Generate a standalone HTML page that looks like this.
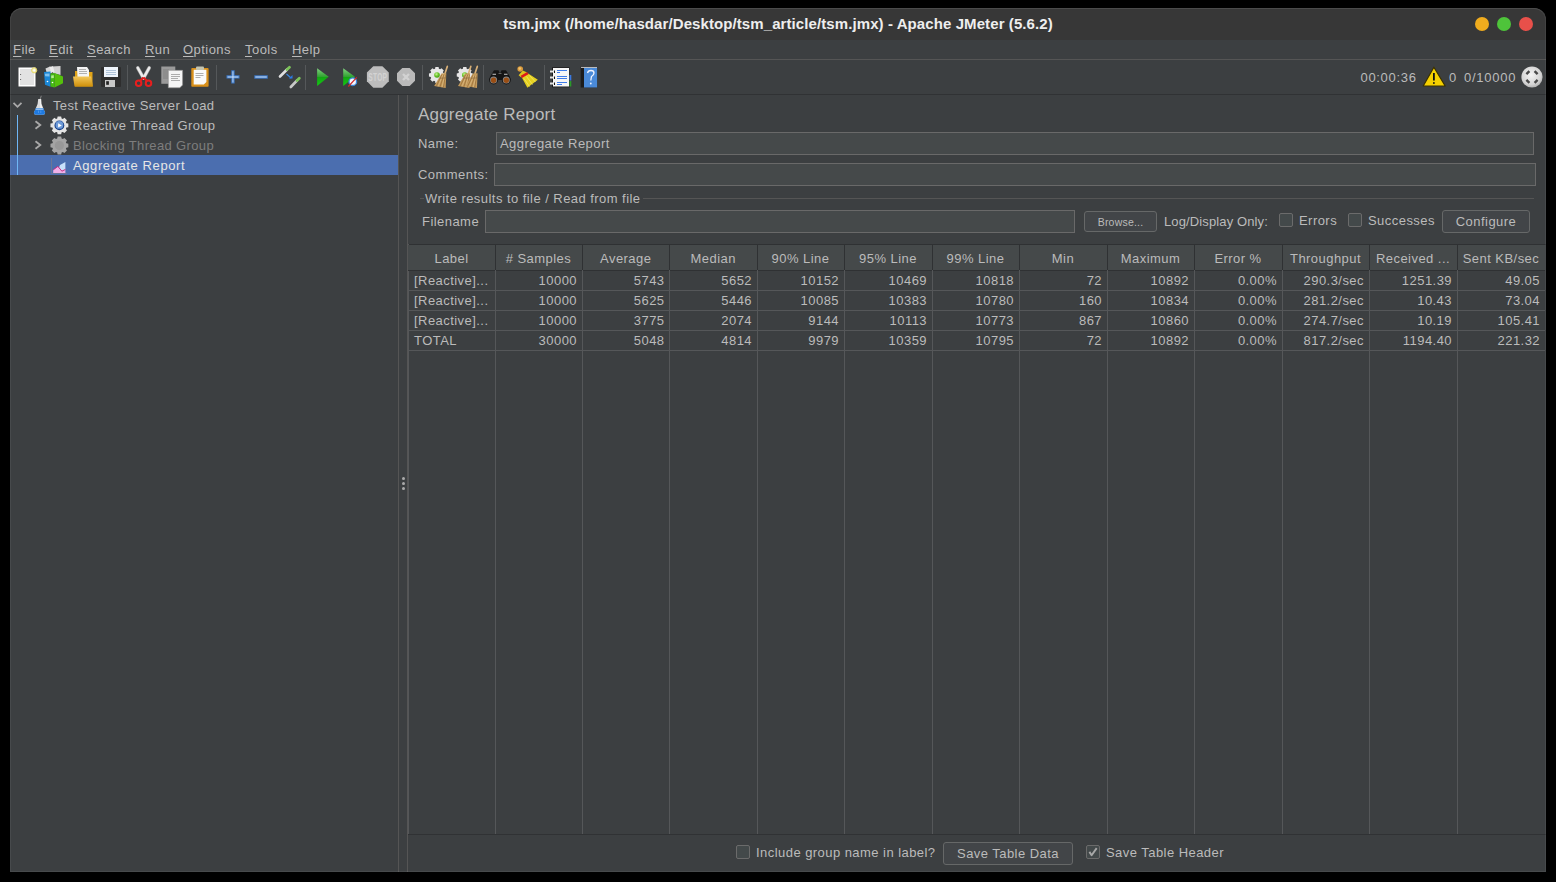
<!DOCTYPE html>
<html><head><meta charset="utf-8">
<style>
*{margin:0;padding:0;box-sizing:border-box}
html,body{width:1556px;height:882px;background:#000;overflow:hidden}
body{font-family:"Liberation Sans",sans-serif;font-size:13px;letter-spacing:0.45px;color:#bbbbbb;position:relative}
.a{position:absolute;white-space:nowrap;line-height:15px}
#win{position:absolute;left:10px;top:8px;width:1536px;height:864px;background:#3c3f41;border-radius:12px 12px 0 0;overflow:hidden}
#winb{position:absolute;left:10px;top:8px;width:1536px;height:864px;border-radius:12px 12px 0 0;border:1px solid rgba(255,255,255,0.06);border-top-color:rgba(255,255,255,0.1)}
#title{position:absolute;left:10px;top:8px;width:1536px;height:32px;background:#373737;border-radius:12px 12px 0 0}
#titletext{position:absolute;left:10px;width:1536px;top:16px;text-align:center;color:#eeeeee;font-weight:bold;font-size:15px;letter-spacing:0.09px;line-height:16px}
.dot{position:absolute;top:17px;width:14px;height:14px;border-radius:50%}
.menu{top:42px}
.menu u{text-decoration:underline;text-underline-offset:1.5px}
.hsep{position:absolute;height:1px}
.vsep{position:absolute;width:1px}
.tree{top:98px;letter-spacing:0.36px}
.th{position:absolute;top:245px;height:25px;background:#45494a;text-align:center;line-height:27px;white-space:nowrap}
.thsep{position:absolute;top:245px;height:25px;width:1px;background:#2f3133}
.td{position:absolute;height:20px;line-height:21px;text-align:right;padding-right:5px;white-space:nowrap}
.td.l{text-align:left;padding-left:6px;padding-right:0}
.vl{position:absolute;top:270px;height:564px;width:1px;background:#555759}
.hl{position:absolute;left:408px;width:1137px;height:1px;background:#555759}
.field{position:absolute;background:#45494a;border:1px solid #696969}
.btn{position:absolute;border:1px solid #666868;border-radius:3px;background:#424548;text-align:center}
.cb{position:absolute;width:14px;height:14px;border:1px solid #6b6b6b;border-radius:2px;background:#43494a}
</style></head><body>
<div id="win"></div>
<div id="title"></div>
<div id="titletext">tsm.jmx (/home/hasdar/Desktop/tsm_article/tsm.jmx) - Apache JMeter (5.6.2)</div>
<div class="dot" style="left:1475px;background:#f0ac1e"></div>
<div class="dot" style="left:1497px;background:#4ec43a"></div>
<div class="dot" style="left:1519px;background:#e8504a"></div>

<span class="a menu" style="left:13px"><u>F</u>ile</span>
<span class="a menu" style="left:49px"><u>E</u>dit</span>
<span class="a menu" style="left:87px"><u>S</u>earch</span>
<span class="a menu" style="left:145px"><u>R</u>un</span>
<span class="a menu" style="left:183px"><u>O</u>ptions</span>
<span class="a menu" style="left:245px"><u>T</u>ools</span>
<span class="a menu" style="left:292px"><u>H</u>elp</span>
<div class="hsep" style="left:10px;top:59px;width:1536px;background:#555555"></div>
<div class="hsep" style="left:10px;top:94px;width:1536px;background:#303234"></div>


<div class="a" style="left:1360.5px;top:70px;letter-spacing:0.68px">00:00:36</div>
<div class="a" style="left:1449px;top:70px">0</div>
<div class="a" style="left:1464px;top:70px;letter-spacing:0.75px">0/10000</div>

<!-- tree -->
<div style="position:absolute;left:10px;top:155px;width:388px;height:20px;background:#4b6eaf"></div>
<div style="position:absolute;left:17px;top:115px;width:1px;height:60px;background:#6fb6f5"></div>
<div class="a tree" style="left:53px;top:98px">Test Reactive Server Load</div>
<div class="a tree" style="left:73px;top:118px">Reactive Thread Group</div>
<div class="a tree" style="left:73px;top:138px;color:#7d7d7d">Blocking Thread Group</div>
<div class="a tree" style="left:73px;top:158px;color:#e6e6e6;letter-spacing:0.6px">Aggregate Report</div>

<div class="vsep" style="left:398px;top:95px;height:777px;background:#555555"></div>
<div class="vsep" style="left:407px;top:95px;height:777px;background:#555555"></div>
<div style="position:absolute;left:401.5px;top:477px;width:3px;height:3px;border-radius:50%;background:#aaa"></div>
<div style="position:absolute;left:401.5px;top:482px;width:3px;height:3px;border-radius:50%;background:#aaa"></div>
<div style="position:absolute;left:401.5px;top:487px;width:3px;height:3px;border-radius:50%;background:#aaa"></div>

<!-- form -->
<div class="a" style="left:418px;top:105px;font-size:17px;letter-spacing:0.2px;line-height:20px">Aggregate Report</div>
<div class="a" style="left:418px;top:136px">Name:</div>
<div class="field" style="left:496px;top:132px;width:1038px;height:23px"></div>
<div class="a" style="left:500px;top:136px">Aggregate Report</div>
<div class="a" style="left:418px;top:167px">Comments:</div>
<div class="field" style="left:494px;top:163px;width:1042px;height:23px"></div>
<div class="hsep" style="left:420px;top:198px;width:4px;background:#555"></div>
<div class="a" style="left:425px;top:191px">Write results to file / Read from file</div>
<div class="hsep" style="left:643px;top:198px;width:891px;background:#555"></div>
<div class="a" style="left:422px;top:214px">Filename</div>
<div class="field" style="left:485px;top:210px;width:590px;height:23px"></div>
<div class="btn" style="left:1084px;top:211px;width:73px;height:21px;font-size:10.5px;letter-spacing:0.2px;line-height:20px">Browse...</div>
<div class="a" style="left:1164px;top:214px;letter-spacing:0.12px">Log/Display Only:</div>
<div class="cb" style="left:1279px;top:213px"></div>
<div class="a" style="left:1299px;top:213px">Errors</div>
<div class="cb" style="left:1348px;top:213px"></div>
<div class="a" style="left:1368px;top:213px">Successes</div>
<div class="btn" style="left:1442px;top:210px;width:88px;height:23px;line-height:21px">Configure</div>

<!-- table -->
<div style="position:absolute;left:408px;top:244px;width:1138px;height:1px;background:#2f3133"></div>
<div style="position:absolute;left:408px;top:244px;width:1px;height:591px;background:#555759"></div>
<div style="position:absolute;left:408px;top:270px;width:1137px;height:1px;background:#2f3133"></div>
<div class="th" style="left:408px;width:87px">Label</div>
<div class="th" style="left:495px;width:87px"># Samples</div>
<div class="th" style="left:582px;width:87.5px">Average</div>
<div class="th" style="left:669.5px;width:87.5px">Median</div>
<div class="th" style="left:757px;width:87px">90% Line</div>
<div class="th" style="left:844px;width:88px">95% Line</div>
<div class="th" style="left:932px;width:87px">99% Line</div>
<div class="th" style="left:1019px;width:88px">Min</div>
<div class="th" style="left:1107px;width:87px">Maximum</div>
<div class="th" style="left:1194px;width:88px">Error %</div>
<div class="th" style="left:1282px;width:87px">Throughput</div>
<div class="th" style="left:1369px;width:88px">Received ...</div>
<div class="th" style="left:1457px;width:88px">Sent KB/sec</div>
<div class="thsep" style="left:495px"></div>
<div class="thsep" style="left:582px"></div>
<div class="thsep" style="left:669px"></div>
<div class="thsep" style="left:757px"></div>
<div class="thsep" style="left:844px"></div>
<div class="thsep" style="left:932px"></div>
<div class="thsep" style="left:1019px"></div>
<div class="thsep" style="left:1107px"></div>
<div class="thsep" style="left:1194px"></div>
<div class="thsep" style="left:1282px"></div>
<div class="thsep" style="left:1369px"></div>
<div class="thsep" style="left:1457px"></div>
<div class="vl" style="left:495px"></div>
<div class="vl" style="left:582px"></div>
<div class="vl" style="left:669px"></div>
<div class="vl" style="left:757px"></div>
<div class="vl" style="left:844px"></div>
<div class="vl" style="left:932px"></div>
<div class="vl" style="left:1019px"></div>
<div class="vl" style="left:1107px"></div>
<div class="vl" style="left:1194px"></div>
<div class="vl" style="left:1282px"></div>
<div class="vl" style="left:1369px"></div>
<div class="vl" style="left:1457px"></div>
<div class="hl" style="top:290px"></div>
<div class="hl" style="top:310px"></div>
<div class="hl" style="top:330px"></div>
<div class="hl" style="top:350px"></div>
<div class="td l" style="left:408px;width:87px;top:270px">[Reactive]...</div>
<div class="td" style="left:495px;width:87px;top:270px">10000</div>
<div class="td" style="left:582px;width:87.5px;top:270px">5743</div>
<div class="td" style="left:669.5px;width:87.5px;top:270px">5652</div>
<div class="td" style="left:757px;width:87px;top:270px">10152</div>
<div class="td" style="left:844px;width:88px;top:270px">10469</div>
<div class="td" style="left:932px;width:87px;top:270px">10818</div>
<div class="td" style="left:1019px;width:88px;top:270px">72</div>
<div class="td" style="left:1107px;width:87px;top:270px">10892</div>
<div class="td" style="left:1194px;width:88px;top:270px">0.00%</div>
<div class="td" style="left:1282px;width:87px;top:270px">290.3/sec</div>
<div class="td" style="left:1369px;width:88px;top:270px">1251.39</div>
<div class="td" style="left:1457px;width:88px;top:270px">49.05</div>
<div class="td l" style="left:408px;width:87px;top:290px">[Reactive]...</div>
<div class="td" style="left:495px;width:87px;top:290px">10000</div>
<div class="td" style="left:582px;width:87.5px;top:290px">5625</div>
<div class="td" style="left:669.5px;width:87.5px;top:290px">5446</div>
<div class="td" style="left:757px;width:87px;top:290px">10085</div>
<div class="td" style="left:844px;width:88px;top:290px">10383</div>
<div class="td" style="left:932px;width:87px;top:290px">10780</div>
<div class="td" style="left:1019px;width:88px;top:290px">160</div>
<div class="td" style="left:1107px;width:87px;top:290px">10834</div>
<div class="td" style="left:1194px;width:88px;top:290px">0.00%</div>
<div class="td" style="left:1282px;width:87px;top:290px">281.2/sec</div>
<div class="td" style="left:1369px;width:88px;top:290px">10.43</div>
<div class="td" style="left:1457px;width:88px;top:290px">73.04</div>
<div class="td l" style="left:408px;width:87px;top:310px">[Reactive]...</div>
<div class="td" style="left:495px;width:87px;top:310px">10000</div>
<div class="td" style="left:582px;width:87.5px;top:310px">3775</div>
<div class="td" style="left:669.5px;width:87.5px;top:310px">2074</div>
<div class="td" style="left:757px;width:87px;top:310px">9144</div>
<div class="td" style="left:844px;width:88px;top:310px">10113</div>
<div class="td" style="left:932px;width:87px;top:310px">10773</div>
<div class="td" style="left:1019px;width:88px;top:310px">867</div>
<div class="td" style="left:1107px;width:87px;top:310px">10860</div>
<div class="td" style="left:1194px;width:88px;top:310px">0.00%</div>
<div class="td" style="left:1282px;width:87px;top:310px">274.7/sec</div>
<div class="td" style="left:1369px;width:88px;top:310px">10.19</div>
<div class="td" style="left:1457px;width:88px;top:310px">105.41</div>
<div class="td l" style="left:408px;width:87px;top:330px">TOTAL</div>
<div class="td" style="left:495px;width:87px;top:330px">30000</div>
<div class="td" style="left:582px;width:87.5px;top:330px">5048</div>
<div class="td" style="left:669.5px;width:87.5px;top:330px">4814</div>
<div class="td" style="left:757px;width:87px;top:330px">9979</div>
<div class="td" style="left:844px;width:88px;top:330px">10359</div>
<div class="td" style="left:932px;width:87px;top:330px">10795</div>
<div class="td" style="left:1019px;width:88px;top:330px">72</div>
<div class="td" style="left:1107px;width:87px;top:330px">10892</div>
<div class="td" style="left:1194px;width:88px;top:330px">0.00%</div>
<div class="td" style="left:1282px;width:87px;top:330px">817.2/sec</div>
<div class="td" style="left:1369px;width:88px;top:330px">1194.40</div>
<div class="td" style="left:1457px;width:88px;top:330px">221.32</div>
<div style="position:absolute;left:408px;top:834px;width:1138px;height:1px;background:#303234"></div>

<!-- bottom -->
<div class="cb" style="left:736px;top:845px"></div>
<div class="a" style="left:756px;top:845px">Include group name in label?</div>
<div class="btn" style="left:943px;top:842px;width:130px;height:23px;line-height:21px">Save Table Data</div>
<div class="cb" style="left:1086px;top:845px"></div>
<div class="a" style="left:1106px;top:845px">Save Table Header</div>

<svg style="position:absolute;left:0;top:0" width="1556" height="882" viewBox="0 0 1556 882">
<defs>
  <linearGradient id="gGreen" x1="0" y1="0" x2="0" y2="1"><stop offset="0" stop-color="#7fd07f"/><stop offset="0.5" stop-color="#2ea02e"/><stop offset="0.52" stop-color="#12a812"/><stop offset="1" stop-color="#15c915"/></linearGradient>
  <linearGradient id="gFolder" x1="0" y1="0" x2="0" y2="1"><stop offset="0" stop-color="#f2c75a"/><stop offset="1" stop-color="#cf8f0a"/></linearGradient>
  <radialGradient id="gBall" cx="0.4" cy="0.35" r="0.7"><stop offset="0" stop-color="#c8f59a"/><stop offset="0.5" stop-color="#6cc52a"/><stop offset="1" stop-color="#3a9a10"/></radialGradient>
  <radialGradient id="gCirc" cx="0.45" cy="0.4" r="0.65"><stop offset="0" stop-color="#f4f4f4"/><stop offset="0.7" stop-color="#d4d4d4"/><stop offset="1" stop-color="#a8a8a8"/></radialGradient>
  <linearGradient id="gBlue" x1="0" y1="0" x2="0" y2="1"><stop offset="0" stop-color="#b7d2f0"/><stop offset="1" stop-color="#1e5fc0"/></linearGradient>
</defs>
<!-- 1 new page -->
<rect x="18.5" y="67.5" width="17" height="19" fill="#ffffff"/>
<rect x="20" y="69" width="14" height="16" fill="#e2e2e2"/>
<circle cx="20.6" cy="74.5" r="0.6" fill="#555"/><circle cx="20.6" cy="79.5" r="0.6" fill="#555"/>
<circle cx="34.2" cy="70.3" r="2.6" fill="#f3eeb8" stroke="#e6d760" stroke-width="1" opacity="0.95"/>
<circle cx="34.2" cy="70.3" r="1.1" fill="#fff"/>
<!-- 2 templates -->
<path d="M45.5 68.5 L50 66.5 L52 73 L47 74Z" fill="#d6d6d6"/>
<path d="M52 66.5 L60.5 66 L60.5 75 L53 73Z" fill="#d2d2d2"/>
<path d="M49.5 66.8 L53 66.3 L54.5 72 L51 72.5Z" fill="#ececec"/>
<path d="M44 72 L50.5 71.5 L50.5 86.8 L45 84.8Z" fill="#1b87d6"/>
<path d="M44.8 73.8 L49.5 73.5 L49.5 76.5 L45.2 76.2Z" fill="#7cc0f0"/>
<path d="M50.5 73.5 L54.5 73 L54.5 87.5 L50.5 86.5Z" fill="#45bb12"/>
<path d="M54.5 73 L63 76.5 L63 83.3 L54.5 87.5Z" fill="#55c00c"/>
<path d="M51.2 75.5 L53.8 75.3 L53.8 78 L51.2 78.2Z" fill="#b8f090"/>
<circle cx="47.5" cy="81.5" r="0.8" fill="#fff"/><circle cx="52.5" cy="82.5" r="0.8" fill="#fff"/>
<!-- 3 open folder -->
<path d="M75 71 L80 71 L81 72 L92.5 72 L92.5 86.5 L75 86.5Z" fill="#e0a418"/>
<path d="M77 67 L87 67 L89 70 L89 77 L77.5 77Z" fill="#f4f4f4"/>
<path d="M79 69.5h7 M79 71.5h8 M79 73.5h8" stroke="#a0a0a0" stroke-width="0.8"/>
<path d="M73 76.5 L91 76.5 L93 86.5 L74.5 86.5Z" fill="url(#gFolder)"/>
<!-- 4 save floppy -->
<rect x="101" y="67" width="20" height="20" rx="1" fill="#2e2e2e"/>
<rect x="104" y="67" width="14" height="10" fill="#eef4fb"/>
<path d="M106 70.5h10 M106 72.5h10 M106 74.5h10" stroke="#9fb7d0" stroke-width="0.8"/>
<rect x="105" y="80" width="10" height="7" fill="#c8c8c8"/>
<rect x="106.2" y="81.2" width="2.7" height="3.6" fill="#222"/>
<!-- sep -->
<rect x="127" y="65" width="1" height="25" fill="#55585a"/>
<!-- 5 scissors -->
<path d="M137.8 67.8 L143.5 78.2 M149.2 67.8 L143.5 78.2" stroke="#9a9a9a" stroke-width="3.6" stroke-linecap="round"/>
<path d="M137.8 67.8 L143.5 78.2 M149.2 67.8 L143.5 78.2" stroke="#ececec" stroke-width="2.4" stroke-linecap="round"/>
<path d="M143.5 77.5 L139.8 81 M143.5 77.5 L147.2 81" stroke="#e01c1c" stroke-width="2.2"/>
<circle cx="138.6" cy="83.3" r="2.75" fill="none" stroke="#e81e1e" stroke-width="2"/>
<circle cx="148.5" cy="83.3" r="2.75" fill="none" stroke="#e81e1e" stroke-width="2"/>
<!-- 6 copy -->
<rect x="161.3" y="66.5" width="14" height="17.3" fill="#9a9a9a"/>
<path d="M163 70h6 M163 72h6 M163 74h6 M163 76h6 M163 78h6" stroke="#777" stroke-width="0.7"/>
<path d="M168.3 70.3 L182.6 70.3 L182.6 85 L179.8 87.8 L168.3 87.8Z" fill="#f5f5f5" stroke="#8a8a8a" stroke-width="0.6"/>
<path d="M171 74.5h9 M171 76.5h9 M171 78.5h7 M171 80.5h9" stroke="#9a9a9a" stroke-width="0.8"/>
<!-- 7 paste -->
<rect x="191.3" y="68.1" width="17.3" height="18.7" rx="0.8" fill="#d9901a"/>
<path d="M193.7 69.7 L206.4 69.7 L206.4 82 L203.8 84.4 L193.7 84.4Z" fill="#fafafa"/>
<path d="M195.5 73.5h8 M195.5 75.5h8 M195.5 77.5h5" stroke="#9a9a9a" stroke-width="0.8"/>
<rect x="196" y="66.5" width="8" height="3.5" rx="1" fill="#c4c4b0"/>
<!-- sep -->
<rect x="216" y="65" width="1" height="25" fill="#55585a"/>
<!-- 8 plus -->
<path d="M226.5 75.3 H239.5 V78.6 H226.5Z M231.3 70.3 H234.6 V83.6 H231.3Z" fill="#3b78c8"/>
<path d="M227.5 76.5 H238.5 V77.4 H227.5Z M232.5 71.3 H233.4 V82.6 H232.5Z" fill="#d6e6f8"/>
<!-- 9 minus -->
<rect x="254.3" y="75.3" width="13.5" height="3.4" fill="#3b78c8"/>
<rect x="255.3" y="76.5" width="11.5" height="1" fill="#d6e6f8"/>
<!-- 10 toggle -->
<path d="M280 76.5 L287 69.5" stroke="#e0e0e0" stroke-width="2.6" stroke-linecap="round"/>
<path d="M287 69.5 L289.5 67.3" stroke="#7cc35a" stroke-width="2.8" stroke-linecap="round"/>
<path d="M286.5 74 L291 78" stroke="#3a86e0" stroke-width="1.2"/>
<path d="M289 78.5 L292.5 78.5 L292.5 75Z" fill="#2a7ae8"/>
<path d="M290.8 87 L297 80.5" stroke="#c8c8c8" stroke-width="2.6" stroke-linecap="round"/>
<path d="M297 80.5 L299.3 78.3" stroke="#7cc35a" stroke-width="2.8" stroke-linecap="round"/>
<!-- sep -->
<rect x="305" y="65" width="1" height="25" fill="#55585a"/>
<!-- 11 play -->
<path d="M317.1 68.3 L328.7 76.8 L317.1 86Z" fill="url(#gGreen)"/>
<!-- 12 play no timer -->
<path d="M343.2 68.3 L354.9 76.8 L343.2 86Z" fill="url(#gGreen)"/>
<circle cx="352.8" cy="81.7" r="3.8" fill="#f4f8ff" stroke="#3c86d8" stroke-width="1.3"/>
<path d="M348.3 86.5 L356.8 77.3" stroke="#d42828" stroke-width="1.2"/>
<!-- 13 stop -->
<path d="M373.3 66.2 L382.4 66.2 L388.8 72.6 L388.8 81.3 L382.4 87.7 L373.3 87.7 L366.9 81.3 L366.9 72.6Z" fill="#bdbdbd"/>
<text x="368.3" y="80.8" font-family="Liberation Sans" font-weight="bold" font-size="10" fill="#d3d3d3" textLength="19" lengthAdjust="spacingAndGlyphs">STOP</text>
<!-- 14 shutdown -->
<path d="M402.3 68 L409.7 68 L415 73.3 L415 80.7 L409.7 86 L402.3 86 L397 80.7 L397 73.3Z" fill="#bababa"/>
<path d="M403 74 L409 80 M409 74 L403 80" stroke="#d2d2d2" stroke-width="2.4"/>
<!-- sep -->
<rect x="422" y="65" width="1" height="25" fill="#55585a"/>
<!-- 15 clear -->
<g transform="translate(437 75)">
  <path id="gearT" d="M-1.92 -6.32 L-1.60 -8.04 L1.60 -8.04 L1.92 -6.32 L3.11 -5.82 L4.56 -6.82 L6.82 -4.56 L5.82 -3.11 L6.32 -1.92 L8.04 -1.60 L8.04 1.60 L6.32 1.92 L5.82 3.11 L6.82 4.56 L4.56 6.82 L3.11 5.82 L1.92 6.32 L1.60 8.04 L-1.60 8.04 L-1.92 6.32 L-3.11 5.82 L-4.56 6.82 L-6.82 4.56 L-5.82 3.11 L-6.32 1.92 L-8.04 1.60 L-8.04 -1.60 L-6.32 -1.92 L-5.82 -3.11 L-6.82 -4.56 L-4.56 -6.82 L-3.11 -5.82Z" fill="#e6e6e6"/>
  <circle r="2.8" fill="url(#gBall)"/>
</g>
<path d="M445.0 73.4 L447.3 66.4" stroke="#d8b078" stroke-width="1.7" stroke-linecap="round"/>
<path d="M441.5 73.60000000000001 L446.3 73.2 L445.7 88.0 L434.2 86.0Z" fill="#c39a5c"/>
<path d="M441.8 74.9 L436.5 85.9 M443.8 74.9 L440 86.9 M445.4 74.9 L443.5 87.4" stroke="#9c7038" stroke-width="0.8"/>
<path d="M442.8 74.9 L438.2 86.4 M444.8 74.9 L442 87.2" stroke="#e2c38a" stroke-width="0.6"/>
<path d="M439.7 78.2 L446.1 77.9" stroke="#8a6a40" stroke-width="0.7"/>
<!-- 16 clear all -->
<g transform="translate(464.8 75)">
  <use href="#gearT"/>
  <circle r="2.8" fill="url(#gBall)"/>
</g>
<path d="M468.5 73.4 L470.8 66.4" stroke="#d8b078" stroke-width="1.7" stroke-linecap="round"/>
<path d="M465.3 73.60000000000001 L470.1 73.2 L469.5 88.0 L458.0 86.0Z" fill="#c39a5c"/>
<path d="M465.6 74.9 L460.3 85.9 M467.6 74.9 L463.8 86.9 M469.2 74.9 L467.3 87.4" stroke="#9c7038" stroke-width="0.8"/>
<path d="M466.6 74.9 L462.0 86.4 M468.6 74.9 L465.8 87.2" stroke="#e2c38a" stroke-width="0.6"/>
<path d="M463.5 78.2 L469.90000000000003 77.9" stroke="#8a6a40" stroke-width="0.7"/>
<path d="M475.0 73.4 L477.3 66.4" stroke="#d8b078" stroke-width="1.7" stroke-linecap="round"/>
<path d="M472.8 73.60000000000001 L477.6 73.2 L477.0 88.0 L465.5 86.0Z" fill="#c39a5c"/>
<path d="M473.1 74.9 L467.8 85.9 M475.1 74.9 L471.3 86.9 M476.7 74.9 L474.8 87.4" stroke="#9c7038" stroke-width="0.8"/>
<path d="M474.1 74.9 L469.5 86.4 M476.1 74.9 L473.3 87.2" stroke="#e2c38a" stroke-width="0.6"/>
<path d="M471.0 78.2 L477.40000000000003 77.9" stroke="#8a6a40" stroke-width="0.7"/>
<!-- sep -->
<rect x="483" y="65" width="1" height="25" fill="#55585a"/>
<!-- 17 binoculars -->
<path d="M490.5 76 L494 70.3 L498.5 70.3 L499.8 73.2 L500.2 73.2 L501.5 70.3 L506 70.3 L509.5 76 L510.8 80 L489.2 80Z" fill="#151515"/>
<circle cx="493.6" cy="79.9" r="4.5" fill="#151515"/>
<circle cx="506.3" cy="79.9" r="4.5" fill="#151515"/>
<circle cx="493.6" cy="80" r="3.5" fill="#8a8a8a"/>
<circle cx="506.3" cy="80" r="3.5" fill="#8a8a8a"/>
<circle cx="493.6" cy="80.3" r="2.7" fill="#9a4e14"/>
<circle cx="506.3" cy="80.3" r="2.7" fill="#9a4e14"/>
<path d="M492.5 74.2h3.5 M504 74.2h3.5" stroke="#c8c8c8" stroke-width="1.1"/>
<path d="M498.5 73.5h3" stroke="#777" stroke-width="0.8"/>
<!-- 18 broom -->
<path d="M521.8 77.6 L528.2 73.6 L537.8 79.8 L527.4 87.8Z" fill="#e5d01e"/>
<path d="M526.5 76.5 L532.5 84.5 M524 78.5 L529.5 86.5 M529.5 75.5 L535.5 82" stroke="#f5ea7a" stroke-width="0.7"/>
<path d="M518.6 75.2 L522.8 70.6 L527.2 72.6 L521.3 77.4Z" fill="#dcc21c"/>
<path d="M521.3 76.9 L527.8 73.2" stroke="#de1a1a" stroke-width="2.5"/>
<circle cx="520.2" cy="69" r="2.8" fill="#d99a3a"/>
<circle cx="519.8" cy="68.6" r="1.3" fill="#f0c070"/>
<!-- sep -->
<rect x="544" y="65" width="1" height="25" fill="#55585a"/>
<!-- 19 function helper -->
<rect x="552" y="67.3" width="17.5" height="20" fill="#1a1a1a"/>
<rect x="553" y="68" width="16" height="18.5" fill="#f6f6f6"/>
<rect x="569.5" y="75" width="1.8" height="5.5" fill="#3a78e0"/>
<rect x="569.5" y="81" width="1.8" height="5.5" fill="#2a9a2a"/>
<path d="M550 71.5h4 M550 77.5h4 M550 83.5h4" stroke="#e6e6e6" stroke-width="1.8"/>
<path d="M554.5 70.5v2.5 M554.5 76.5v2.5 M554.5 82.5v2.5" stroke="#111" stroke-width="1"/>
<path d="M557 70.5h10 M557 72.5h3 M557 76.5h10 M557 78.5h10 M557 82.5h10 M557 84.5h5" stroke="#2a6ee8" stroke-width="0.9"/>
<!-- 20 help -->
<rect x="580.7" y="66.6" width="16.4" height="20.9" fill="#1c1c1c"/>
<rect x="584" y="67.8" width="13.1" height="19.7" fill="#4a8ad8"/>
<path d="M581 67.4 H597" stroke="#e0e0e0" stroke-width="0.9"/>
<path d="M587.5 73 Q588 70.5 591 70.5 Q594 70.5 594 73 Q594 75 591.5 76.5 L590.8 80.5" fill="none" stroke="#f0f4ff" stroke-width="1.3"/>
<circle cx="590.8" cy="83.5" r="0.9" fill="#f0f4ff"/>
<!-- warning -->
<path d="M1433.9 67.2 L1445.2 86 L1423.2 86Z" fill="#f5d000" stroke="#3a3000" stroke-width="1.2" stroke-linejoin="round"/>
<path d="M1433.9 73 V80.5" stroke="#111" stroke-width="1.8"/>
<circle cx="1433.9" cy="83" r="0.9" fill="#111"/>
<!-- circle -->
<circle cx="1532" cy="77" r="10.6" fill="url(#gCirc)"/>
<path d="M1526.4 74.1 L1529.4 71.1 M1534.6 71.1 L1537.6 74.1 M1526.4 79.9 L1529.4 82.9 M1534.6 82.9 L1537.6 79.9" stroke="#4a4a4a" stroke-width="2.4"/>
<!-- tree icons -->
<path d="M13.5 102.8 L17.5 106.8 L21.5 102.8" fill="none" stroke="#a9a9a9" stroke-width="1.8"/>
<path d="M41.3 95.8 L40.2 99" stroke="#8a8a8a" stroke-width="0.9"/>
<path d="M38.2 99 L41.2 99 L41.6 104 L45.1 112.8 Q45.2 114.8 43 114.8 L36 114.8 Q33.8 114.8 33.9 112.8 L37.6 104Z" fill="#dcdcdc"/>
<path d="M39.8 99.5 L40.8 99.5 L41 104 L43.5 111 L40.5 111Z" fill="#f4f4f4"/>
<path d="M35.8 108.3 L43.3 108.3 L45.1 112.8 Q45.2 114.8 43 114.8 L36 114.8 Q33.8 114.8 33.9 112.8Z" fill="#1f7ae0"/>
<path d="M36.2 108.6 L42.8 108.6 L43.3 110 L35.7 110Z" fill="#8cbcf0"/>
<path d="M38.5 110.5 L38.5 113 M40.8 110.5 L40.8 113" stroke="#5aa0f0" stroke-width="0.7"/>
<path d="M35.5 121.2 L40.3 125 L35.5 128.8" fill="none" stroke="#a9a9a9" stroke-width="1.8"/>
<path d="M35.5 141.2 L40.3 145 L35.5 148.8" fill="none" stroke="#a9a9a9" stroke-width="1.8"/>
<g transform="translate(59.4 125.4)" fill="#e4e4e4">
  <path id="gear2" d="M-2.20 -6.96 L-1.78 -8.93 L1.78 -8.93 L2.20 -6.96 L3.37 -6.48 L5.06 -7.57 L7.57 -5.06 L6.48 -3.37 L6.96 -2.20 L8.93 -1.78 L8.93 1.78 L6.96 2.20 L6.48 3.37 L7.57 5.06 L5.06 7.57 L3.37 6.48 L2.20 6.96 L1.78 8.93 L-1.78 8.93 L-2.20 6.96 L-3.37 6.48 L-5.06 7.57 L-7.57 5.06 L-6.48 3.37 L-6.96 2.20 L-8.93 1.78 L-8.93 -1.78 L-6.96 -2.20 L-6.48 -3.37 L-7.57 -5.06 L-5.06 -7.57 L-3.37 -6.48Z"/>
  <circle r="4.9" fill="#163f88"/>
  <circle cx="0" cy="-0.5" r="3.9" fill="#6d9ad8"/>
  <path d="M-1.3 -2.2 L2.4 0 L-1.3 2.2Z" fill="#fff"/>
</g>
<g transform="translate(59.4 145.5)">
  <use href="#gear2" fill="#a4a4a4"/>
  <circle r="4.6" fill="#989898"/>
</g>
<path d="M51.5 158 V173.4 H66.9" fill="none" stroke="#7a7a8a" stroke-width="0.7"/>
<path d="M53.2 169.9 L57.9 166.4 L61.9 171.2 L65.4 169.4 L65.4 173 L53.2 173Z" fill="#f0b0e8"/>
<path d="M60 165 L65.4 162 L65.4 169.4 L61.9 171.2 L59 167.5Z" fill="#c8e0fa"/>
<path d="M53.2 169.9 L57.9 166.4 L61.9 171.2 L65.4 169.4" fill="none" stroke="#d0207a" stroke-width="0.9"/>
<path d="M1089.4 851.9 L1091.6 855.2 L1096.7 848.1" fill="none" stroke="#a8a8a8" stroke-width="1.9" stroke-linejoin="round"/>
</svg>

<div id="winb"></div>
</body></html>
